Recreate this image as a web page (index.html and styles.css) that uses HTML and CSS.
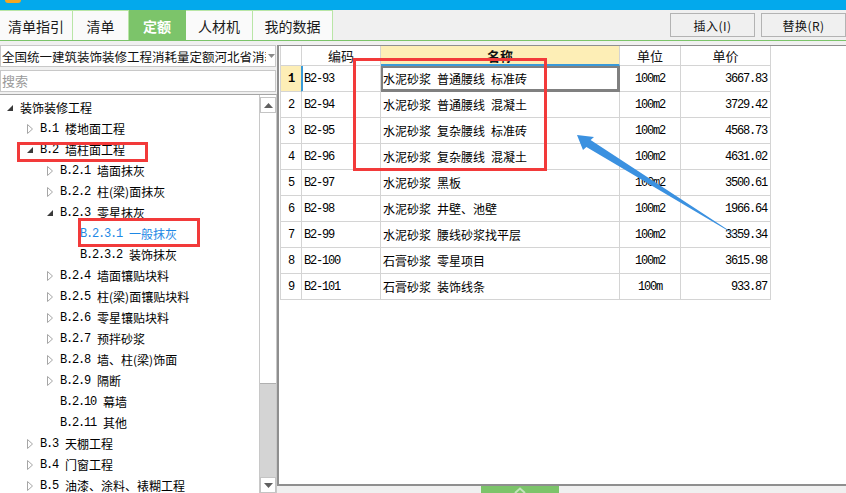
FILE: index.html
```html
<!DOCTYPE html>
<html lang="zh-CN">
<head>
<meta charset="utf-8">
<title>定额</title>
<link rel="stylesheet" href="styles.css">
</head>
<body>
<div class="app">
  <div class="titlebar"><div class="logo"></div></div>

  <div class="tabbar">
    <div class="tabs">
      <div class="tab t1">清单指引</div>
      <div class="tab t2">清单</div>
      <div class="tab t3 active">定额</div>
      <div class="tab t4">人材机</div>
      <div class="tab t5">我的数据</div>
    </div>
    <div class="actions">
      <button class="btn">插入(I)</button>
      <button class="btn">替换(R)</button>
    </div>
  </div>

  <div class="main">
    <div class="left">
      <div class="select">
        <span class="select-text">全国统一建筑装饰装修工程消耗量定额河北省消耗</span>
        <span class="caret"><svg width="7" height="4" viewBox="0 0 7 4"><path d="M0 0H7L3.5 4Z" fill="#8a8a8a"/></svg></span>
      </div>
      <div class="search">搜索</div>
      <div class="tree">
        <div class="tree-list">
          <div class="row l0"><span class="ic"><svg width="6" height="6" viewBox="0 0 6 6"><path d="M6 0V6H0Z" fill="#3a3a3a"/></svg></span>装饰装修工程</div>
          <div class="row l1"><span class="ic"><svg width="6" height="10" viewBox="0 0 6 10"><path d="M0.5 0.5L5.5 5L0.5 9.5Z" fill="none" stroke="#a6a6a6"/></svg></span><span class="m">B.1</span>楼地面工程</div>
          <div class="row l1"><span class="ic"><svg width="6" height="6" viewBox="0 0 6 6"><path d="M6 0V6H0Z" fill="#3a3a3a"/></svg></span><span class="m">B.2</span>墙柱面工程</div>
          <div class="row l2"><span class="ic"><svg width="6" height="10" viewBox="0 0 6 10"><path d="M0.5 0.5L5.5 5L0.5 9.5Z" fill="none" stroke="#a6a6a6"/></svg></span><span class="m">B.2.1</span>墙面抹灰</div>
          <div class="row l2"><span class="ic"><svg width="6" height="10" viewBox="0 0 6 10"><path d="M0.5 0.5L5.5 5L0.5 9.5Z" fill="none" stroke="#a6a6a6"/></svg></span><span class="m">B.2.2</span>柱(梁)面抹灰</div>
          <div class="row l2"><span class="ic"><svg width="6" height="6" viewBox="0 0 6 6"><path d="M6 0V6H0Z" fill="#3a3a3a"/></svg></span><span class="m">B.2.3</span>零星抹灰</div>
          <div class="row l3 selected"><span class="ic"></span><span class="m">B.2.3.1</span>一般抹灰</div>
          <div class="row l3"><span class="ic"></span><span class="m">B.2.3.2</span>装饰抹灰</div>
          <div class="row l2"><span class="ic"><svg width="6" height="10" viewBox="0 0 6 10"><path d="M0.5 0.5L5.5 5L0.5 9.5Z" fill="none" stroke="#a6a6a6"/></svg></span><span class="m">B.2.4</span>墙面镶贴块料</div>
          <div class="row l2"><span class="ic"><svg width="6" height="10" viewBox="0 0 6 10"><path d="M0.5 0.5L5.5 5L0.5 9.5Z" fill="none" stroke="#a6a6a6"/></svg></span><span class="m">B.2.5</span>柱(梁)面镶贴块料</div>
          <div class="row l2"><span class="ic"><svg width="6" height="10" viewBox="0 0 6 10"><path d="M0.5 0.5L5.5 5L0.5 9.5Z" fill="none" stroke="#a6a6a6"/></svg></span><span class="m">B.2.6</span>零星镶贴块料</div>
          <div class="row l2"><span class="ic"><svg width="6" height="10" viewBox="0 0 6 10"><path d="M0.5 0.5L5.5 5L0.5 9.5Z" fill="none" stroke="#a6a6a6"/></svg></span><span class="m">B.2.7</span>预拌砂浆</div>
          <div class="row l2"><span class="ic"><svg width="6" height="10" viewBox="0 0 6 10"><path d="M0.5 0.5L5.5 5L0.5 9.5Z" fill="none" stroke="#a6a6a6"/></svg></span><span class="m">B.2.8</span>墙、柱(梁)饰面</div>
          <div class="row l2"><span class="ic"><svg width="6" height="10" viewBox="0 0 6 10"><path d="M0.5 0.5L5.5 5L0.5 9.5Z" fill="none" stroke="#a6a6a6"/></svg></span><span class="m">B.2.9</span>隔断</div>
          <div class="row l2"><span class="ic"></span><span class="m">B.2.10</span>幕墙</div>
          <div class="row l2"><span class="ic"></span><span class="m">B.2.11</span>其他</div>
          <div class="row l1"><span class="ic"><svg width="6" height="10" viewBox="0 0 6 10"><path d="M0.5 0.5L5.5 5L0.5 9.5Z" fill="none" stroke="#a6a6a6"/></svg></span><span class="m">B.3</span>天棚工程</div>
          <div class="row l1"><span class="ic"><svg width="6" height="10" viewBox="0 0 6 10"><path d="M0.5 0.5L5.5 5L0.5 9.5Z" fill="none" stroke="#a6a6a6"/></svg></span><span class="m">B.4</span>门窗工程</div>
          <div class="row l1"><span class="ic"><svg width="6" height="10" viewBox="0 0 6 10"><path d="M0.5 0.5L5.5 5L0.5 9.5Z" fill="none" stroke="#a6a6a6"/></svg></span><span class="m">B.5</span>油漆、涂料、裱糊工程</div>
        </div>
        <div class="scrollbar">
          <div class="sb-btn"><svg width="9" height="5" viewBox="0 0 9 5"><path d="M0 5H9L4.5 0Z" fill="#606060"/></svg></div>
          <div class="sb-thumb"></div>
          <div class="sb-track"></div>
          <div class="sb-btn"><svg width="9" height="5" viewBox="0 0 9 5"><path d="M0 0H9L4.5 5Z" fill="#606060"/></svg></div>
        </div>
      </div>
    </div>

    <div class="right">
      <div class="grid-panel">
        <div class="grid">
          <div class="gr head">
            <div class="c num"></div>
            <div class="c code">编码</div>
            <div class="c name">名称</div>
            <div class="c unit">单位</div>
            <div class="c price">单价</div>
          </div>
          <div class="gr current">
            <div class="c num m">1</div>
            <div class="c code m">B2-93</div>
            <div class="c name">水泥砂浆&ensp;普通腰线&ensp;标准砖</div>
            <div class="c unit m">100m2</div>
            <div class="c price m">3667.83</div>
          </div>
          <div class="gr">
            <div class="c num m">2</div>
            <div class="c code m">B2-94</div>
            <div class="c name">水泥砂浆&ensp;普通腰线&ensp;混凝土</div>
            <div class="c unit m">100m2</div>
            <div class="c price m">3729.42</div>
          </div>
          <div class="gr">
            <div class="c num m">3</div>
            <div class="c code m">B2-95</div>
            <div class="c name">水泥砂浆&ensp;复杂腰线&ensp;标准砖</div>
            <div class="c unit m">100m2</div>
            <div class="c price m">4568.73</div>
          </div>
          <div class="gr">
            <div class="c num m">4</div>
            <div class="c code m">B2-96</div>
            <div class="c name">水泥砂浆&ensp;复杂腰线&ensp;混凝土</div>
            <div class="c unit m">100m2</div>
            <div class="c price m">4631.02</div>
          </div>
          <div class="gr">
            <div class="c num m">5</div>
            <div class="c code m">B2-97</div>
            <div class="c name">水泥砂浆&ensp;黑板</div>
            <div class="c unit m">100m2</div>
            <div class="c price m">3500.61</div>
          </div>
          <div class="gr">
            <div class="c num m">6</div>
            <div class="c code m">B2-98</div>
            <div class="c name">水泥砂浆&ensp;井壁、池壁</div>
            <div class="c unit m">100m2</div>
            <div class="c price m">1966.64</div>
          </div>
          <div class="gr">
            <div class="c num m">7</div>
            <div class="c code m">B2-99</div>
            <div class="c name">水泥砂浆&ensp;腰线砂浆找平层</div>
            <div class="c unit m">100m2</div>
            <div class="c price m">3359.34</div>
          </div>
          <div class="gr">
            <div class="c num m">8</div>
            <div class="c code m">B2-100</div>
            <div class="c name">石膏砂浆&ensp;零星项目</div>
            <div class="c unit m">100m2</div>
            <div class="c price m">3615.98</div>
          </div>
          <div class="gr">
            <div class="c num m">9</div>
            <div class="c code m">B2-101</div>
            <div class="c name">石膏砂浆&ensp;装饰线条</div>
            <div class="c unit m">100m</div>
            <div class="c price m">933.87</div>
          </div>
        </div>
      </div>
      <div class="splitter">
        <div class="handle"><svg width="12" height="6" viewBox="0 0 12 6"><path d="M1 6L6 1.5L11 6" fill="none" stroke="rgba(255,255,255,0.55)" stroke-width="2"/></svg></div>
      </div>
    </div>
  </div>

  <svg class="annot" width="846" height="493" viewBox="0 0 846 493">
    <g fill="none" stroke="#f23a3a" stroke-width="3">
      <rect x="18.5" y="143.5" width="128" height="17"/>
      <rect x="79.5" y="219.5" width="119" height="26"/>
      <rect x="354.5" y="59.5" width="191" height="110"/>
    </g>
    <polygon points="577,135 594,137 590.6,140.1 742,239 586.4,146.9 583,150" fill="#3b91e0"/>
  </svg>
</div>
</body>
</html>
```

FILE: styles.css
```css
* { box-sizing: border-box; }
html, body { margin: 0; padding: 0; }
body {
  width: 846px;
  height: 493px;
  overflow: hidden;
  background: #f0f0f0;
  font-family: "Noto Sans CJK SC", "Noto Sans", sans-serif;
  font-size: 12px;
  color: #000;
}
.app {
  position: relative;
  width: 846px;
  height: 493px;
  display: flex;
  flex-direction: column;
}
.m {
  font-family: "Liberation Mono", "Noto Sans CJK SC", monospace;
  font-size: 12px;
  letter-spacing: -1.2px;
}

/* title bar */
.titlebar { height: 10px; flex: none; background: #03a9ec; padding-left: 5px; }
.logo { width: 16px; height: 3px; background: #f5a623; border-radius: 0 0 3px 3px; }

/* tabs */
.tabbar {
  height: 31px;
  flex: none;
  display: flex;
  border-bottom: 1px solid #7cc46a;
  background: #f0f0f0;
}
.tabs { display: flex; }
.tab {
  height: 30px;
  border-top: 1px solid #b9e6a6;
  border-right: 1px solid #b9e6a6;
  background: #fafafa;
  display: flex;
  align-items: center;
  justify-content: center;
  font-size: 14px;
  color: #1a1a1a;
}
.t1 { width: 73px; }
.t2 { width: 56px; }
.t3 { width: 57px; }
.t4 { width: 67px; }
.t5 { width: 80px; }
.tab.active { background: #7cc46a; border-color: #7cc46a; color: #fff; font-weight: bold; }
.actions { margin-left: auto; display: flex; gap: 6px; padding-top: 3px; }
.btn {
  width: 85px;
  height: 24px;
  padding: 0;
  border: 1px solid #b3b3b3;
  background: #f0f0f0;
  font-family: "Noto Sans CJK SC", sans-serif;
  font-size: 12px;
  letter-spacing: 0.5px;
  color: #111;
}

/* main area */
.main { flex: 1; display: flex; margin-top: 4px; min-height: 0; }

/* left panel */
.left { width: 277px; flex: none; display: flex; flex-direction: column; }
.select {
  width: 276px;
  height: 22px;
  flex: none;
  border: 1px solid #c8c8c8;
  background: #fff;
  display: flex;
  align-items: center;
  padding-left: 1px;
}
.select-text {
  width: 264px;
  overflow: hidden;
  white-space: nowrap;
  font-size: 12.5px;
  color: #111;
}
.caret { margin-left: 2px; display: flex; }
.search {
  width: 276px;
  height: 22px;
  flex: none;
  margin-top: 3px;
  border: 1px solid #c8c8c8;
  background: #fff;
  color: #9a9a9a;
  font-size: 13px;
  line-height: 20px;
  padding-left: 1px;
}
.tree {
  flex: 1;
  min-height: 0;
  margin-top: 2px;
  display: flex;
  background: #fff;
  border-top: 1px solid #a5a5a5;
  border-right: 1px solid #c8c8c8;
}
.tree-list { flex: 1; padding-top: 2px; overflow: hidden; }
.row { height: 21px; display: flex; align-items: center; white-space: nowrap; }
.row .m { margin-right: 7px; }
.ic { width: 20px; flex: none; padding-left: 7px; display: flex; align-items: center; }
.l1 { padding-left: 20px; }
.l2 { padding-left: 40px; }
.l3 { padding-left: 60px; }
.row.selected { color: #1e88e5; }

.scrollbar {
  width: 17px;
  flex: none;
  display: flex;
  flex-direction: column;
  padding-top: 2px;
  border-left: 1px solid #c8c8c8;
  background: #fff;
}
.sb-btn {
  height: 16px;
  flex: none;
  display: flex;
  align-items: center;
  justify-content: center;
  border: 1px solid #c4c4c4;
  background: #fff;
}
.sb-thumb { height: 271px; flex: none; background: #fff; border-bottom: 1px solid #b0b0b0; }
.sb-track { flex: 1; background: #d4d4d4; }

/* right panel */
.right { flex: 1; min-width: 0; display: flex; flex-direction: column; }
.grid-panel {
  flex: 1;
  background: #fff;
  border-top: 1px solid #8f8f8f;
  border-left: 2px solid #8f8f8f;
  border-bottom: 2px solid #8f8f8f;
  padding-left: 1px;
}
.grid { width: 491px; }
.gr {
  display: grid;
  grid-template-columns: 22px 79px 239px 61px 90px;
  height: 26px;
}
.c {
  border-right: 1px solid #d4d4d4;
  border-bottom: 1px solid #d4d4d4;
  display: flex;
  align-items: center;
  white-space: nowrap;
  overflow: hidden;
}
.c.num { border-left: 1px solid #d4d4d4; justify-content: center; }
.c.code { padding-left: 2px; }
.c.name { padding-left: 2px; }
.c.unit { justify-content: center; }
.c.price { justify-content: flex-end; padding-right: 3px; }

.gr.head { height: 20px; }
.head .c { justify-content: center; padding: 0; font-size: 13px; color: #111; }
.head .c.name { background: #fdeeb6; border-bottom: 2px solid #3a9ad9; font-weight: bold; }

.current .c.num { background: #fdeeb6; font-weight: bold; border-right-color: #3a9ad9; }
.current .c.code { box-shadow: inset 1px 0 #3a9ad9; }
.current .c.name { box-shadow: inset 0 0 0 2px #808080; border-right-color: #808080; border-bottom-color: #808080; }

.splitter { height: 7px; flex: none; background: #f0f0f0; }
.handle {
  margin-left: 204px;
  width: 78px;
  height: 7px;
  background: #7cc46a;
  display: flex;
  justify-content: center;
  align-items: flex-end;
}

/* annotation overlay */
.annot { position: absolute; left: 0; top: 0; pointer-events: none; }
```
